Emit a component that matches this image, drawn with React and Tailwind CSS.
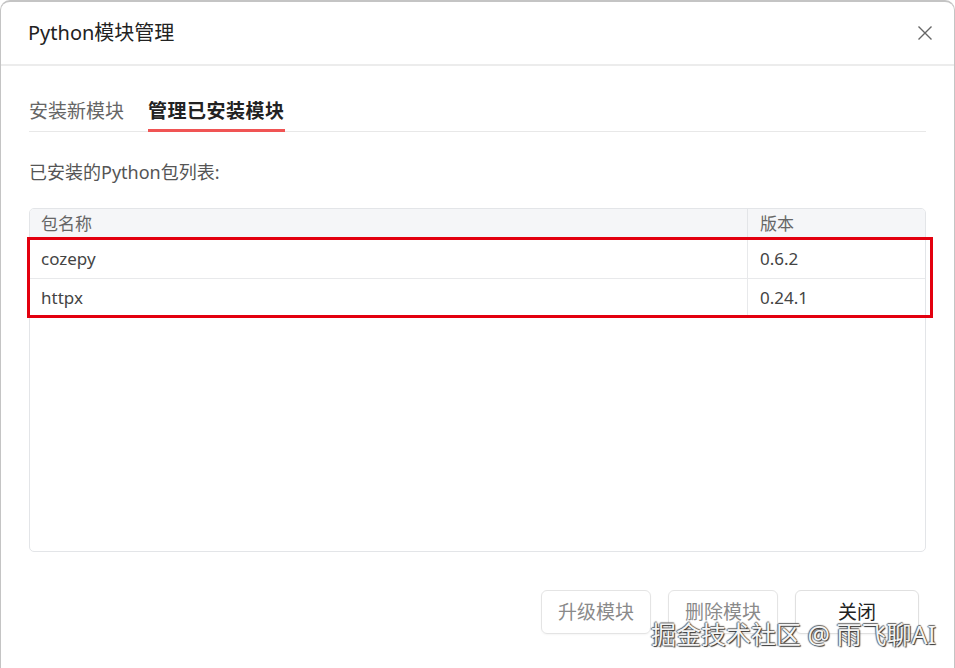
import React, { useState } from "react";

const packages = [
  { name: "cozepy", version: "0.6.2" },
  { name: "httpx", version: "0.24.1" },
];

const App = () => {
  const [tab, setTab] = useState("manage");

  return (
    <div className="relative w-[955px] h-[668px] bg-white font-['Noto_Sans','Noto_Sans_CJK_SC',sans-serif] overflow-hidden">
      <div className="h-full flex flex-col rounded-t-[10px] border-t-2 border-x border-[#c4c4c4] bg-white">
        {/* HEADER */}
        <div className="h-[64px] shrink-0 flex items-center justify-between pl-[27px] pr-[21px] border-b-2 border-[#ececec]">
          <span className="text-[20px] text-[#222]">Python模块管理</span>
          <svg width="16" height="16" viewBox="0 0 16 16" className="text-[#666]">
            <path d="M1.5 1.5 L14.5 14.5 M14.5 1.5 L1.5 14.5" stroke="currentColor" strokeWidth="1.4" fill="none" />
          </svg>
        </div>

        <div className="flex-1 flex flex-col px-[28px]">
          {/* TABS */}
          <div className="mt-[31px] flex gap-[24px] border-b border-[#e8e8e8]">
            <button
              onClick={() => setTab("install")}
              className={`-mb-px text-[19px] leading-[28px] pb-[4px] border-b-[3px] ${
                tab === "install" ? "border-[#f05454] text-[#222] font-bold" : "border-transparent text-[#666]"
              }`}
            >
              安装新模块
            </button>
            <button
              onClick={() => setTab("manage")}
              className={`-mb-px text-[19px] leading-[28px] pb-[4px] border-b-[3px] tracking-[0.5px] ${
                tab === "manage" ? "border-[#f05454] text-[#222] font-bold" : "border-transparent text-[#666]"
              }`}
            >
              管理已安装模块
            </button>
          </div>

          {/* LIST */}
          <p className="mt-[27px] text-[18px] leading-[26px] text-[#555]">已安装的Python包列表:</p>

          <div className="mt-[23px] h-[344px] border border-[#e3e5e8] rounded-[5px] overflow-hidden text-[17px]">
            <div className="flex h-[31px] bg-[#f5f6f8] border-b border-[#e3e5e8] text-[#666]">
              <div className="w-[718px] px-[11px] flex items-center border-r border-[#e3e5e8]">包名称</div>
              <div className="flex-1 px-[12px] flex items-center">版本</div>
            </div>
            {packages.map((p, i) => (
              <div key={i} className={`flex border-b border-[#e8e9eb] text-[#444] ${i === 0 ? "h-[39px]" : "h-[38px]"}`}>
                <div className="w-[718px] px-[11px] flex items-center border-r border-[#e8e9eb]">{p.name}</div>
                <div className="flex-1 px-[12px] flex items-center">{p.version}</div>
              </div>
            ))}
          </div>

          {/* BUTTONS */}
          <div className="mt-[38px] flex justify-end gap-[17px] pr-[7px]">
            <button className="w-[110px] h-[44px] rounded-[6px] border border-[#e4e4e4] text-[19px] text-[#8a8a8a] shadow-[0_1px_2px_rgba(0,0,0,0.04)]">
              升级模块
            </button>
            <button className="w-[110px] h-[44px] rounded-[6px] border border-[#e4e4e4] text-[19px] text-[#8a8a8a] shadow-[0_1px_2px_rgba(0,0,0,0.04)]">
              删除模块
            </button>
            <button className="w-[124px] h-[44px] rounded-[6px] border border-[#e0e0e0] text-[19px] text-[#222] shadow-[0_1px_2px_rgba(0,0,0,0.05)]">
              关闭
            </button>
          </div>
        </div>
      </div>

      {/* highlight annotation */}
      <div className="absolute left-[27px] top-[237px] w-[906px] h-[81px] border-[3px] border-[#e3000f] pointer-events-none" />

      {/* watermark */}
      <div className="absolute left-[651px] top-[618px] text-[25px] leading-[32px] text-[#f4f4f4] whitespace-nowrap pointer-events-none [text-shadow:1px_1px_1px_#333,-1px_0_1px_#666,0_-1px_1px_#666]">
        掘金技术社区 @ 雨飞聊AI
      </div>
    </div>
  );
};

export default App;
